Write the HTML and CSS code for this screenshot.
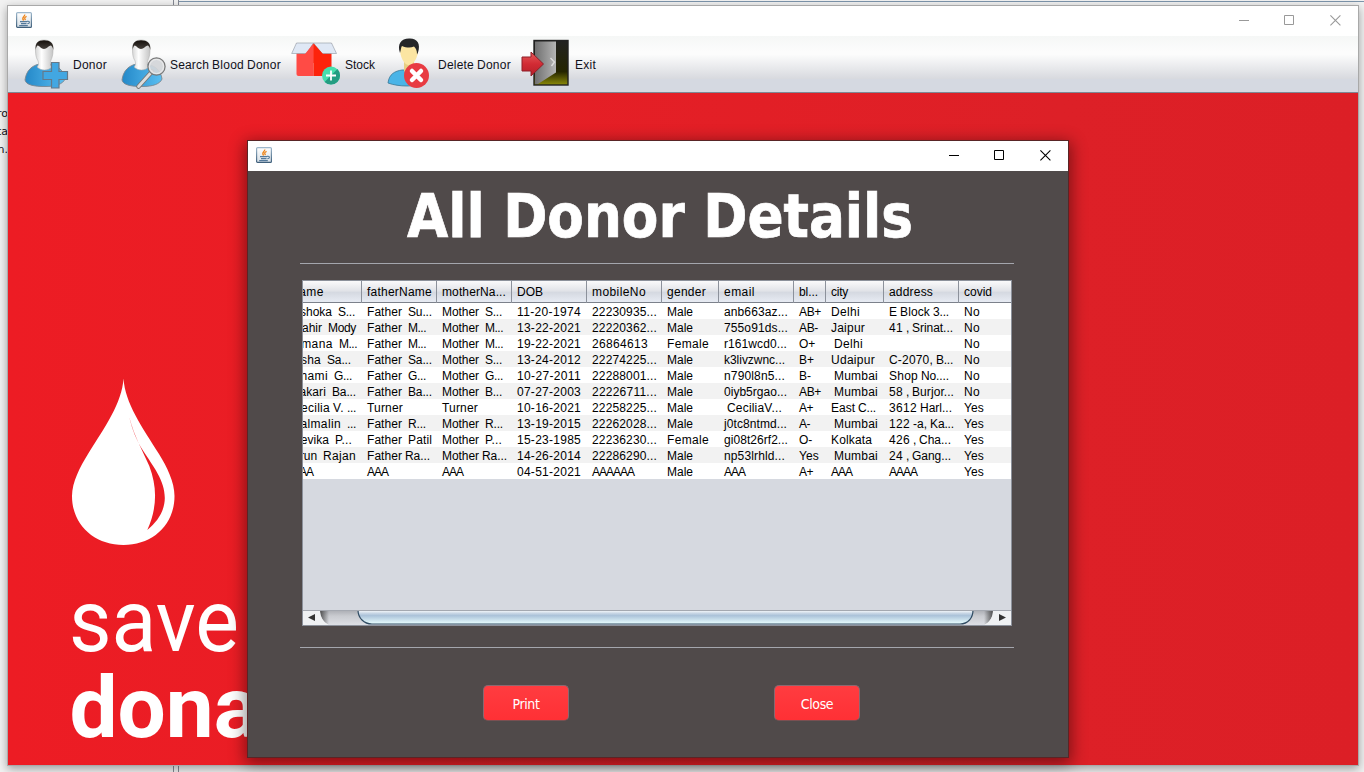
FILE: index.html
```html
<!DOCTYPE html>
<html lang="en">
<head>
<meta charset="utf-8">
<title>All Donor Details</title>
<link rel="stylesheet" href="styles.css">
</head>
<body>
<svg class="defs" width="0" height="0" aria-hidden="true">
  <defs>
    <linearGradient id="body" x1="0" y1="0" x2="1" y2="0"><stop offset="0" stop-color="#2488c8"/><stop offset="1" stop-color="#5abff2"/></linearGradient>
    <linearGradient id="face" x1="0" y1="0" x2="1" y2="0"><stop offset="0" stop-color="#d5d5d5"/><stop offset=".35" stop-color="#fff"/><stop offset="1" stop-color="#c4c4c4"/></linearGradient>
    <linearGradient id="hair" x1="0" y1="0" x2="0" y2="1"><stop offset="0" stop-color="#15100c"/><stop offset="1" stop-color="#4a4540"/></linearGradient>
    <linearGradient id="door" x1="0" y1="0" x2="0" y2="1"><stop offset="0" stop-color="#222"/><stop offset=".7" stop-color="#242400"/><stop offset="1" stop-color="#8c8b08"/></linearGradient>
    <linearGradient id="leaf" x1="0" y1="0" x2="1" y2="0"><stop offset="0" stop-color="#707070"/><stop offset="1" stop-color="#b4b4b4"/></linearGradient>
    <linearGradient id="arrow" x1="0" y1="0" x2="0" y2="1"><stop offset="0" stop-color="#e45a5a"/><stop offset=".5" stop-color="#d22b34"/><stop offset="1" stop-color="#b51f28"/></linearGradient>
    <linearGradient id="tile" x1="0" y1="0" x2="0" y2="1"><stop offset="0" stop-color="#fff"/><stop offset="1" stop-color="#d6dfe6"/></linearGradient>
    <linearGradient id="tileEdge" x1="0" y1="0" x2="0" y2="1"><stop offset="0" stop-color="#9eb8cc"/><stop offset="1" stop-color="#3f5f7b"/></linearGradient>
    <symbol id="java" viewBox="0 0 16 16">
      <rect x=".6" y=".6" width="14.8" height="14.8" rx="1" fill="url(#tile)" stroke="url(#tileEdge)" stroke-width="1.2"/>
      <path d="M8.7 2.5c.8 1.800-3.900 2.700-1.100 6M10.600 4.300c-1.900.9-2.600 1.900-1.100 3.900" fill="none" stroke="#ee8418" stroke-width="1.3"/>
      <path d="M4 9.600h7M5 11.600h5.500M3.200 13.600h8.600" stroke="#54799a" stroke-width="1.1"/>
      <path d="M11 9.400c3.400-.9 3 2.300.3 2.400" fill="none" stroke="#54799a" stroke-width="1.1"/>
    </symbol>
    <symbol id="person" viewBox="0 0 48 52">
      <path d="M1 42C2 33 8 27 16 26h9c9 1 15 7 16 15-2 5-9 7.500-20 7.500S2 47 1 42Z" fill="url(#body)" stroke="#7b8791" stroke-width=".9"/>
      <path d="M11.500 13C11 5 14 2 20 2s10 3 9 11c0 4-1 7-2 9-1 2-1 6 1 7-4 4-11 4-15 0 2-2 2-5 0-8-1-2-1.500-5-1.500-8Z" fill="url(#face)" stroke="#aaa" stroke-width=".5"/>
      <path d="M11.700 12C11 5 14 2.300 20 2.300S30 5 29.300 12C29 9.500 28 8.500 27 7.500c-3 .5-4 3.500-7 3.500s-4-3-6.500-3.500c-1 1-1.600 2.500-1.800 4.500Z" fill="url(#hair)"/>
    </symbol>
    <symbol id="minimize" viewBox="0 0 11 11"><path d="M0 5.500h10" stroke="currentColor"/></symbol>
    <symbol id="maximize" viewBox="0 0 11 11"><path d="M.5.5h9v9h-9Z" fill="none" stroke="currentColor"/></symbol>
    <symbol id="close" viewBox="0 0 11 11"><path d="m.4.400 10 10m0-10-10 10" stroke="currentColor" stroke-width="1.1"/></symbol>
  </defs>
</svg>

<div class="desktop">
  <div class="back-split"></div>
  <div class="back-main"></div>
  <div class="back-text"><span>ro</span><span>ta</span><span>n.</span></div>

  <section class="window app">
    <header class="titlebar inactive">
      <svg class="java"><use href="#java"/></svg>
      <div class="controls"><svg><use href="#minimize"/></svg><svg><use href="#maximize"/></svg><svg><use href="#close"/></svg></div>
    </header>
    <nav class="menubar">
      <a class="item donor"><svg width="48" height="52"><use href="#person"/><path d="M27.500 24.500h7.500v9h8.500v8H35v8.500h-7.500v-8.500h-8.500v-8h8.500Z" fill="#42a7e2" stroke="#64798a" stroke-width="1.2"/></svg><span class="snap">Donor</span></a>
      <a class="item search"><svg width="48" height="52"><use href="#person"/><path d="M31 33.500 17.500 48.500" stroke="#777" stroke-width="4.600" stroke-linecap="round"/><path d="M31 33.500 17.500 48.500" stroke="#ddd" stroke-width="2.700" stroke-linecap="round"/><circle cx="35.500" cy="28.500" r="8.600" fill="#d4d6d9" fill-opacity=".92" stroke="#777" stroke-width="1.200"/><circle cx="35.500" cy="28.500" r="7" fill="none" stroke="#eee"/></svg><span class="snap">Search Blood Donor</span></a>
      <a class="item stock"><svg width="50" height="52"><path d="M5.500 5h17v33h-15q-2 0-2-2Z" fill="#ff4b45"/><path d="M22.500 5h18v31.500q0 1.500-2 1.500h-16Z" fill="#fd230b"/><path d="M5.500 5h17l-7 10.500H.7Z" fill="#dfe8f5" stroke="#9ba4ae" stroke-width=".7"/><path d="M22.500 5h18l5 10.500H31Z" fill="#dfe8f5" stroke="#9ba4ae" stroke-width=".7"/><path d="M22.500 5.500 14 16v9h8.500Z" fill="#ff4b45"/><path d="m22.500 5.500 9.500 10.500v9h-9.500Z" fill="#fd230b"/><circle cx="40" cy="37.500" r="9" fill="#46dfad"/><path d="M46.400 31.100a9 9 0 0 1-12.800 12.800Z" fill="#239d82"/><path d="M40 32.500v10m-5-5h10" stroke="#fff" stroke-width="1.800"/></svg><span class="snap">Stock</span></a>
      <a class="item delete"><svg width="48" height="52"><path d="M1 45c1-9 7-12 14-13h10c8 1 12 6 13 13-10 4-26 4-37 0Z" fill="#4ab4e7" stroke="#367797" stroke-width=".8"/><path d="M17 24h10v9c-2 4-8 4-10 0Z" fill="#e8ce83"/><path d="M13 11c0-4 3-6 9-6 6 0 9 3 9 8s-4 14-9 14-9-8-9-16Z" fill="#fbe5a2"/><path d="M13 15C10 6 14 .5 22 .5c8-.5 12 5 9 14l-1 2c0-4-1-6-3-8-4 2-8 1-12-.5-1 1-1 4-2 7Z" fill="#252628"/><circle cx="29.500" cy="37.500" r="12.500" fill="#e83b42"/><path d="m25 33 9 9m0-9-9 9" stroke="#fff" stroke-width="4.500" stroke-linecap="round"/></svg><span class="snap">Delete Donor</span></a>
      <a class="item exit"><svg width="48" height="52"><rect x="13" y="2.500" width="34" height="44.500" fill="url(#door)" stroke="#222" stroke-width="1.400"/><path d="M14 3.500h21v31L17 46h-3Z" fill="url(#leaf)"/><path d="m29.500 20 4 4-3 4" fill="none" stroke="#ddd" stroke-width="1.400"/><path d="M1 19h9v-5l12.500 12L10 38v-5H1Z" fill="url(#arrow)" stroke="#8e1f28"/></svg><span class="snap">Exit</span></a>
    </nav>
    <main class="poster">
      <svg class="campaign" width="300" height="400" viewBox="65 370 300 400">
        <path fill="#fff" fill-rule="evenodd" d="M123.500 378.500C125 403 142 427 159 454c8 13 15.500 28 15.500 42 0 29-22 49-51 49s-51.500-20-51.500-49c0-14 8-29 16-42 17-27 34-51 35.500-75.500ZM129.300 417c5 20 14 35 20 49 8 21 8 42-2 64 11-9 17.500-20 17.500-32 0-18-12-32-21.500-47-7-11-11-21-14-34Z"/>
        <text class="save" x="69" y="651" textLength="170" lengthAdjust="spacingAndGlyphs">save</text>
        <text class="donate" x="69.500" y="737" textLength="190" lengthAdjust="spacingAndGlyphs">dona</text>
      </svg>
    </main>
  </section>

  <section class="window dialog">
    <header class="titlebar">
      <svg class="java"><use href="#java"/></svg>
      <div class="controls"><svg><use href="#minimize"/></svg><svg><use href="#maximize"/></svg><svg><use href="#close"/></svg></div>
    </header>
    <div class="content">
      <svg class="heading" width="520" height="92"><text x="7" y="66" textLength="506" lengthAdjust="spacingAndGlyphs">All Donor Details</text></svg>
      <hr>
      <div class="pane">
        <div class="viewport"><table class="grid"><colgroup><col class="w75"><col class="w75"><col class="w75"><col class="w75"><col class="w75"><col class="w57"><col class="w75"><col class="w32"><col class="w58"><col class="w75"><col class="w52"></colgroup><thead></thead><tbody></tbody></table></div>
        <svg class="scrollbar" width="708" height="15">
          <defs><linearGradient id="thumb" x1="0" y1="0" x2="0" y2="1"><stop offset="0" stop-color="#fff"/><stop offset=".25" stop-color="#c5d4e4"/><stop offset=".4" stop-color="#abc2d9"/><stop offset="1" stop-color="#eaffff"/></linearGradient><linearGradient id="track" x1="0" y1="0" x2="0" y2="1"><stop offset="0" stop-color="#aaacb2"/><stop offset=".4" stop-color="#c9cbd0"/><stop offset="1" stop-color="#dddfe5"/></linearGradient><linearGradient id="shadeL"><stop offset="0" stop-color="#333"/><stop offset="1" stop-color="#333" stop-opacity="0"/></linearGradient><linearGradient id="shadeR"><stop offset="0" stop-color="#333" stop-opacity="0"/><stop offset="1" stop-color="#333"/></linearGradient></defs>
          <path d="M0 0h708v15H0Z" fill="url(#track)"/>
          <path d="M17 0h9v15c-5-2-9-8-9-15Z" fill="url(#shadeL)" opacity=".8"/><path d="M681 0h9c0 7-3 12-9 15Z" fill="url(#shadeR)" opacity=".8"/>
          <path d="M0 0h17c0 7 3 12 9 15H0Z" fill="#eff1f3"/><path d="M708 0h-18c0 7-3 12-9 15h27Z" fill="#eff1f3"/>
          <path d="M55 0c0 8 6 14 14 14h588c8 0 13-6 13-14Z" fill="url(#thumb)" stroke="#2f4b62" stroke-width="1.200"/>
          <path d="M0 .5h708" stroke="#a4a8b0"/><path d="M12 4v7L5 7.500Zm684 0v7l7-3.500Z" fill="#333"/>
        </svg>
      </div>
      <hr>
      <div class="actions"><button>Print</button><button>Close</button></div>
    </div>
  </section>
</div>
<script src="table.js"></script>
</body>
</html>
```
FILE: styles.css
```css
* { box-sizing: border-box; }
body { margin: 0; font: 12px "Liberation Sans", Arial, sans-serif; color: #10101a; }
.defs { position: absolute; }
.desktop { position: relative; width: 1364px; height: 772px; overflow: hidden; background: #f2f2f2; }
.back-split { position: absolute; left: 173px; top: 0; width: 6px; height: 772px; border: solid #858994; border-width: 0 1px; }
.back-main { position: absolute; left: 179px; top: 0; right: 0; height: 2px; border-bottom: 1px solid #7d95ab; }
.back-text { position: absolute; left: -6px; top: 105px; width: 14px; display: flex; flex-direction: column; align-items: flex-end; font: 11px/18px "DejaVu Sans", sans-serif; }
.window { position: absolute; display: flex; flex-direction: column; }
.app { left: 7px; top: 5px; width: 1352px; height: 761px; border: 1px solid #a9a9a9; box-shadow: 0 3px 9px rgba(0,0,0,.35); }
.dialog { left: 247px; top: 140px; width: 822px; height: 618px; border: 1px solid #592526; background: #504a4a; box-shadow: 0 4px 15px 2px rgba(0,0,0,.45); }
.titlebar { flex: 0 0 30px; display: flex; align-items: center; justify-content: space-between; padding: 0 17px 0 8px; background: #fff; color: #000; }
.titlebar.inactive { color: #999; }
.java { width: 16px; height: 16px; margin-top: -2px; }
.controls { display: grid; grid-template-columns: 45px 46px 11px; }
.controls svg { width: 11px; height: 11px; margin-top: -1px; }
.menubar { flex: 0 0 57px; display: flex; padding-left: 16px; border-bottom: 1px solid #7f8793; background: linear-gradient(#f5f7f6, #fcfcfc 27%, #fcfcfc 33%, #d8dadf 76%, #d5d9e1 78%, #d5d9e1); }
.item { display: flex; align-items: center; gap: 1px; white-space: nowrap; }
.item svg { flex: none; }
.item span { padding-top: 1px; }
.item > .snap { padding-top: 2px; }
.item .snap span { padding: 0; }
.donor { width: 97px; }
.search { width: 170px; }
.stock { width: 96px; gap: 4px; }
.delete { width: 134px; gap: 3px; }
.exit { gap: 6px; }
.poster { flex: 1; padding: 277px 0 0 57px; overflow: hidden; background: linear-gradient(90deg, #ed1c24, #e81e25 30%, #dd2027 78%, #dc1f26); }
.campaign { display: block; }
.campaign text { font-family: Roboto, sans-serif; font-size: 87px; fill: #fff; }
.campaign .donate { font-weight: 700; font-size: 86px; }
.content { flex: 1; display: flex; flex-direction: column; align-items: center; }
.heading { display: block; flex: none; margin-left: 3px; }
.heading text { font: bold 60px "DejaVu Sans Condensed", "DejaVu Sans", sans-serif; fill: #fff; stroke: #fff; stroke-width: .7px; }
hr { width: 714px; height: 1px; flex: none; margin: 0 2px 0 0; border: 0; background: #a4a6ad; }
.pane { width: 710px; height: 346px; flex: none; margin: 16px 2px 21px 0; border: 1px solid #8c919b; background: #d6d9e0; display: flex; flex-direction: column; justify-content: space-between; }
.viewport { display: flex; justify-content: flex-end; overflow: hidden; }
.grid { flex: none; width: 724px; table-layout: fixed; border-collapse: collapse; color: #000; }
.w75 { width: 75px; } .w57 { width: 57px; } .w32 { width: 32px; } .w58 { width: 58px; } .w52 { width: 52px; }
.grid th { height: 22px; padding: 0 0 0 5px; text-align: left; font-weight: 400; white-space: pre; box-shadow: inset -1px 0 #8c919b, inset 0 -1px #7c818b; background: linear-gradient(#fafafb, #e1e3e8 45%, #d5d9e1 52%, #e9edf5); }
.grid td { height: 16px; padding: 2px 0 0 5px; line-height: 14px; white-space: pre; overflow: hidden; }
.grid th:last-child { box-shadow: inset 0 -1px #7c818b; }
.grid tbody tr { background: #fff; }
.grid tbody tr:nth-child(even) { background: #f2f2f2; }
.scrollbar { display: block; flex: none; }
.actions { display: flex; gap: 205px; padding: 37px 0 0 27px; }
button { width: 86px; height: 36px; padding: 2px 0 0; border: 1px solid #8b6870; border-bottom-color: #7a5052; border-radius: 5px; background: linear-gradient(#ff3c40, #ff3035); color: #fff; font: 14px "DejaVu Sans Condensed", "Noto Sans", sans-serif; letter-spacing: -.35px; }
```
FILE: table.js
```javascript
const header = ["name", "fatherName", "motherNa...", "DOB", "mobileNo", "gender", "email", "bl...", "city", "address", "covid"];
const rows = [
  ["Ashoka  S...", "Father  Su...", "Mother  S...", "11-20-1974", "22230935...", "Male", "anb663az...", "AB+", "Delhi", "E Block 3...", "No"],
  ["Mahir  Mody", "Father  M...", "Mother  M...", "13-22-2021", "22220362...", "Male", "755o91ds...", "AB-", "Jaipur", "41 , Srinat...", "No"],
  ["Umana  M...", "Father  M...", "Mother  M...", "19-22-2021", "26864613", "Female", "r161wcd0...", "O+", " Delhi", "", "No"],
  ["Usha  Sa...", "Father  Sa...", "Mother  S...", "13-24-2012", "22274225...", "Male", "k3livzwnc...", "B+", "Udaipur", "C-2070, B...", "No"],
  ["Shami  G...", "Father  G...", "Mother  G...", "10-27-2011", "22288001...", "Male", "n790l8n5...", "B-", " Mumbai", "Shop No....", "No"],
  ["Zakari  Ba...", "Father  Ba...", "Mother  B...", "07-27-2003", "22226711...", "Male", "0iyb5rgao...", "AB+", " Mumbai", "58 , Burjor...", "No"],
  ["Cecilia V. ...", "Turner", "Turner", "10-16-2021", "22258225...", "Male", " CeciliaV...", "A+", "East C...", "3612 Harl...", "Yes"],
  ["Salmalin  ...", "Father  R...", "Mother  R...", "13-19-2015", "22262028...", "Male", "j0tc8ntmd...", "A-", " Mumbai", "122 -a, Ka...", "Yes"],
  ["Devika  P...", "Father  Patil", "Mother  P...", "15-23-1985", "22236230...", "Female", "gi08t26rf2...", "O-", "Kolkata", "426 , Cha...", "Yes"],
  ["Arun  Rajan", "Father Ra...", "Mother Ra...", "14-26-2014", "22286290...", "Male", "np53lrhld...", "Yes", " Mumbai", "24 , Gang...", "Yes"],
  ["AAA", "AAA", "AAA", "04-51-2021", "AAAAAA", "Male", "AAA", "A+", "AAA", "AAAA", "Yes"]
];

// Whole-pixel glyph advances for the 12px interface font.
const advances = {};
const groups = { 3: " fijlt.,", 4: "r-", 5: "vy", 6: "ckszJ", 7: "abdeghnopqu0123456789AFTYZ+", 8: "BEKPSVX", 9: "CDGHMNORUQw", 11: "m" };
for (const [width, chars] of Object.entries(groups)) for (const c of chars) advances[c] = Number(width);
const pen = document.createElement("canvas").getContext("2d");
pen.font = '12px "Liberation Sans"';

function snap(el) {
  const text = el.textContent;
  if (!text) return;
  el.textContent = "";
  for (const part of text.match(/\s+|\S+/g)) {
    const span = document.createElement("span");
    span.textContent = part;
    const goal = [...part].reduce((sum, c) => sum + (advances[c] || 7), 0);
    span.style.letterSpacing = (goal - pen.measureText(part).width) / part.length + "px";
    el.append(span);
  }
}

function addRow(parent, tag, values) {
  const tr = parent.insertRow();
  for (const value of values) {
    const cell = document.createElement(tag);
    cell.textContent = value;
    snap(cell);
    tr.append(cell);
  }
}

addRow(document.querySelector("thead"), "th", header);
rows.forEach(row => addRow(document.querySelector("tbody"), "td", row));
document.querySelectorAll(".snap").forEach(snap);
```
